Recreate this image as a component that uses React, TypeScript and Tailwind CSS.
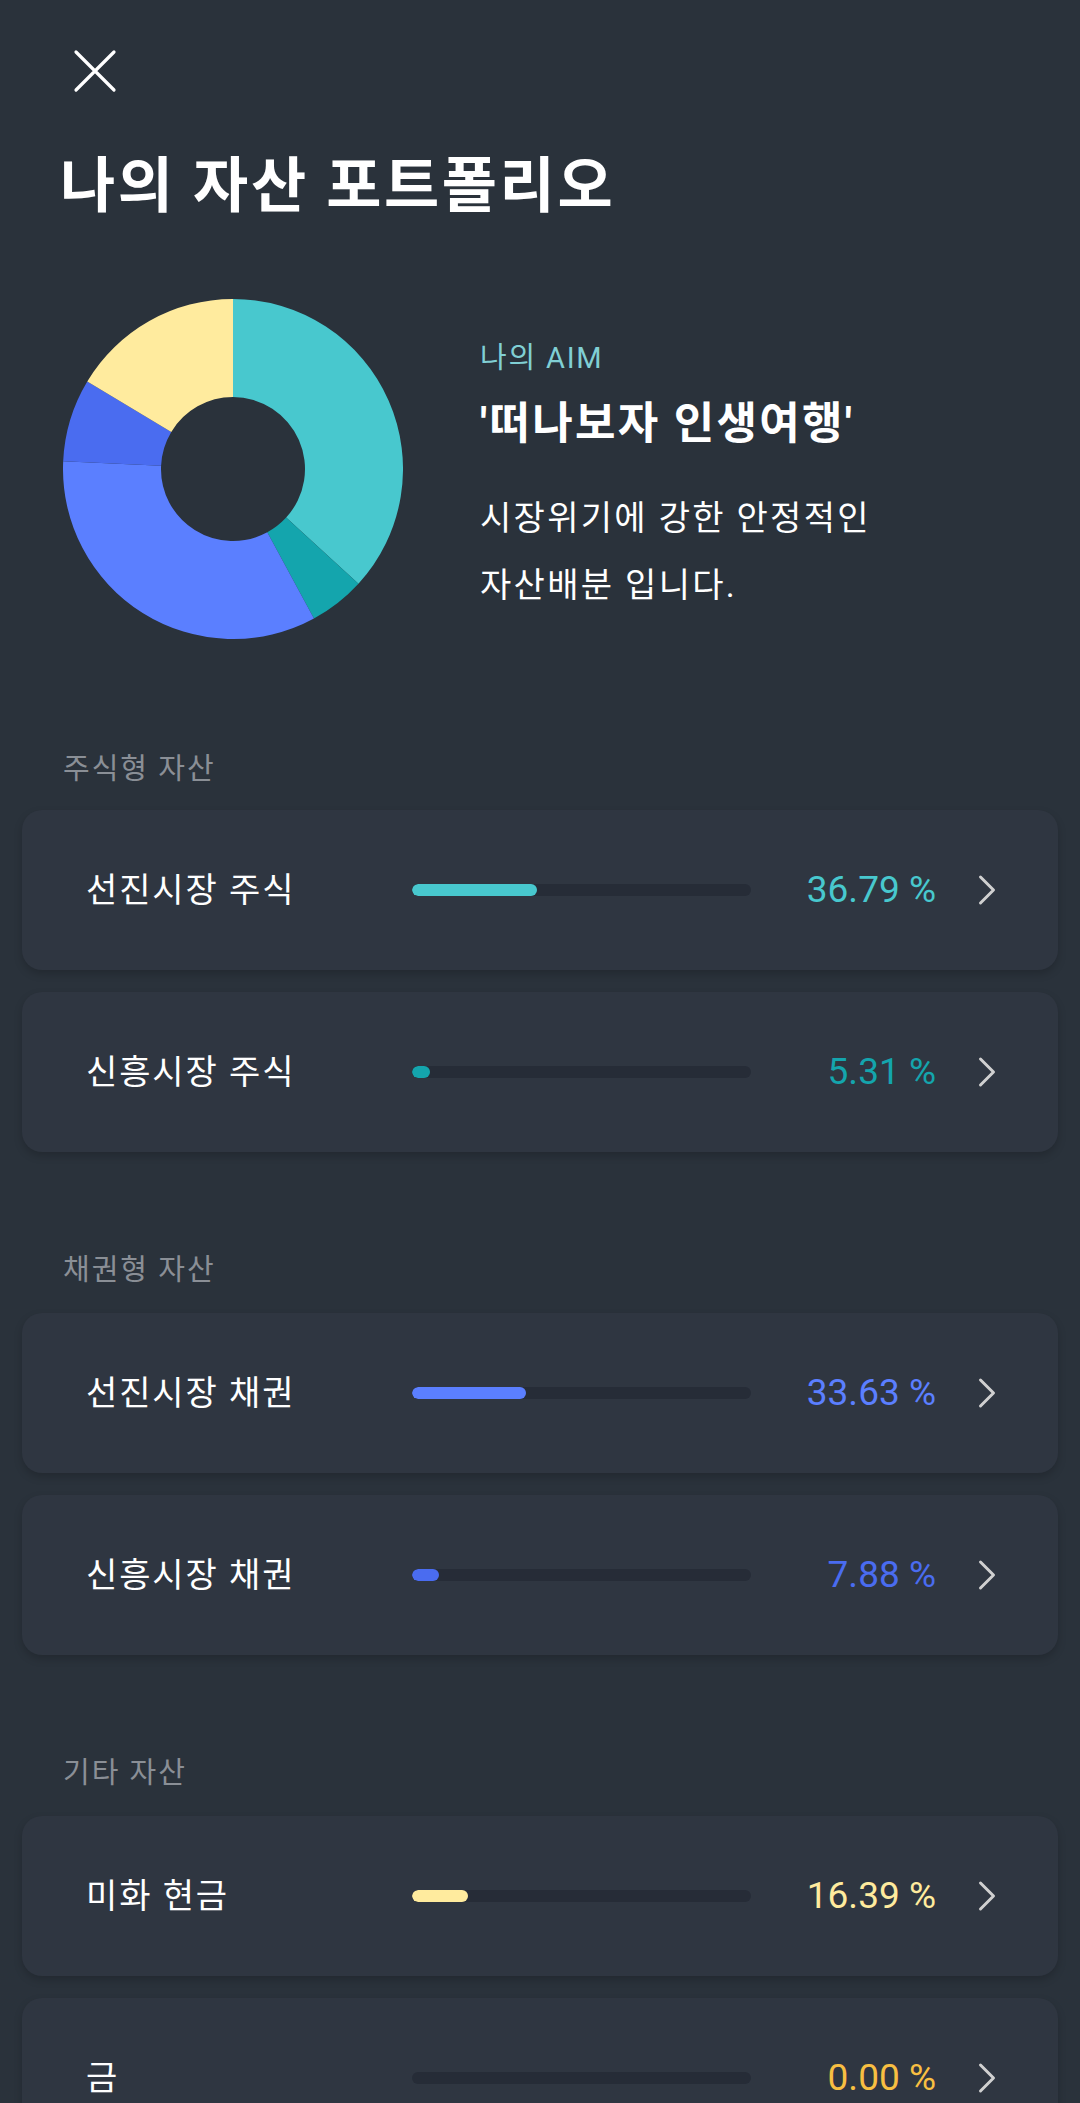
import React from "react";

type Item = { label: string; pct: number; color: string };

const sections: { title: string; items: Item[] }[] = [
  {
    title: "주식형 자산",
    items: [
      { label: "선진시장 주식", pct: 36.79, color: "#48C8CE" },
      { label: "신흥시장 주식", pct: 5.31, color: "#14A5AD" },
    ],
  },
  {
    title: "채권형 자산",
    items: [
      { label: "선진시장 채권", pct: 33.63, color: "#5B7FFF" },
      { label: "신흥시장 채권", pct: 7.88, color: "#4A6CF0" },
    ],
  },
  {
    title: "기타 자산",
    items: [
      { label: "미화 현금", pct: 16.39, color: "#FFEB9E" },
      { label: "금", pct: 0.0, color: "#F8BF42" },
    ],
  },
];

const pieData = [
  { v: 36.79, c: "#48C8CE" },
  { v: 5.31, c: "#14A5AD" },
  { v: 33.63, c: "#5B7FFF" },
  { v: 7.88, c: "#4A6CF0" },
  { v: 16.39, c: "#FFEB9E" },
];

function Donut() {
  const cx = 170;
  const cy = 170;
  const R = 170;
  const r = 72;
  let acc = 0;
  const total = pieData.reduce((s, d) => s + d.v, 0);
  const pt = (rad: number, a: number) => [cx + rad * Math.sin(a), cy - rad * Math.cos(a)];
  return (
    <svg width="340" height="340" viewBox="0 0 340 340">
      {pieData.map((d, i) => {
        const a0 = (acc / total) * Math.PI * 2;
        acc += d.v;
        const a1 = (acc / total) * Math.PI * 2;
        const large = a1 - a0 > Math.PI ? 1 : 0;
        const [x0, y0] = pt(R, a0);
        const [x1, y1] = pt(R, a1);
        const [x2, y2] = pt(r, a1);
        const [x3, y3] = pt(r, a0);
        const dd = `M${x0} ${y0} A${R} ${R} 0 ${large} 1 ${x1} ${y1} L${x2} ${y2} A${r} ${r} 0 ${large} 0 ${x3} ${y3} Z`;
        return <path key={i} d={dd} fill={d.c} />;
      })}
    </svg>
  );
}

function Chevron() {
  return (
    <svg width="20" height="32" viewBox="0 0 20 32" className="shrink-0">
      <path d="M3.5 3 L16.5 16 L3.5 29" fill="none" stroke="#d0d0d0" strokeWidth="3" strokeLinecap="round" strokeLinejoin="round" />
    </svg>
  );
}

function Row({ item }: { item: Item }) {
  return (
    <div className="mx-[22px] h-[160px] rounded-[20px] bg-[#2F3641] shadow-[0_4px_8px_rgba(0,0,0,0.18)] flex items-center pl-[64px] pr-[61px]">
      <div className="w-[326px] shrink-0 text-[34px] leading-[40px] tracking-[1.9px] text-white">{item.label}</div>
      <div className="w-[339px] h-[12px] shrink-0 rounded-full bg-[#262C37] overflow-hidden">
        {item.pct > 0 && (
          <div className="h-full rounded-full" style={{ width: `${item.pct}%`, backgroundColor: item.color }} />
        )}
      </div>
      <div className="flex-1 text-right text-[37px] leading-[40px]" style={{ color: item.color }}>
        {item.pct.toFixed(2)} %
      </div>
      <div className="ml-[41px] flex items-center">
        <Chevron />
      </div>
    </div>
  );
}

export default function App() {
  return (
    <div
      className="w-[1080px] h-[2103px] overflow-hidden bg-[#2A323B] text-white"
      style={{ fontFamily: 'Roboto, "Noto Sans CJK KR", sans-serif' }}
    >
      <div className="pt-[49px] pl-[73px]">
        <svg width="44" height="44" viewBox="0 0 44 44">
          <path d="M3 3 L41 41 M41 3 L3 41" stroke="#ffffff" strokeWidth="3.2" strokeLinecap="round" />
        </svg>
      </div>
      <h1 className="mt-[59px] pl-[60px] text-[60px] leading-[70px] tracking-[2.6px] font-bold">나의 자산 포트폴리오</h1>

      <div className="mt-[77px] flex">
        <div className="ml-[63px] shrink-0">
          <Donut />
        </div>
        <div className="ml-[77px] pt-[39px]">
          <div className="text-[29px] leading-[40px] tracking-[1.8px] text-[#80CFD4]">나의 AIM</div>
          <div className="mt-[18px] text-[44px] leading-[56px] tracking-[2.3px] font-bold">'떠나보자 인생여행'</div>
          <div className="mt-[33px] text-[34px] leading-[67px] tracking-[2.3px]">
            시장위기에 강한 안정적인
            <br />
            자산배분 입니다.
          </div>
        </div>
      </div>

      {sections.map((s, si) => (
        <div key={si} className={si === 0 ? "mt-[110px]" : "mt-[98px]"}>
          <div className="pl-[63px] text-[29px] leading-[40px] tracking-[2px] text-[#8A8F96]">{s.title}</div>
          <div className={`${si === 0 ? "mt-[21px]" : "mt-[23px]"} flex flex-col gap-[22px]`}>
            {s.items.map((it, ii) => (
              <Row key={ii} item={it} />
            ))}
          </div>
        </div>
      ))}
    </div>
  );
}
